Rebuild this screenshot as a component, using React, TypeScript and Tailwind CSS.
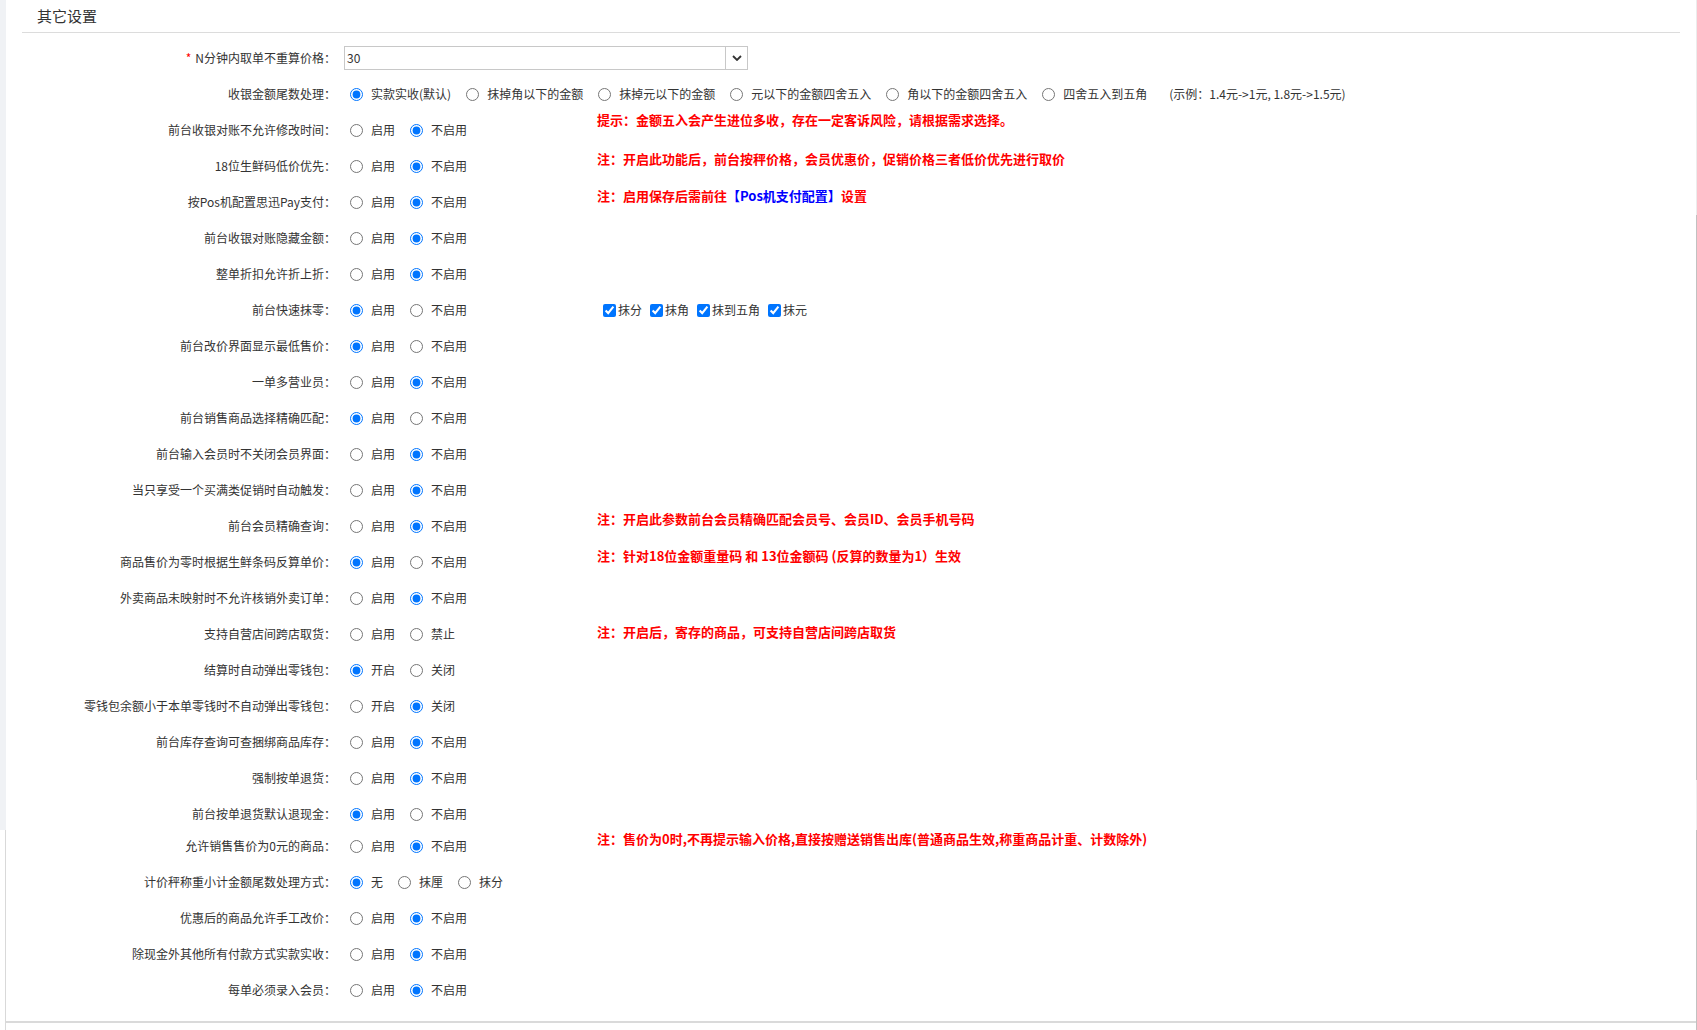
import type { ReactNode } from "react";

type Opt = { label: string; checked?: boolean };

type Row = {
  label: string;
  opts: Opt[];
  note?: ReactNode;
  noteCls?: string;
  h?: string;
};

const yes = (on: boolean): Opt[] => [
  { label: "启用", checked: on },
  { label: "不启用", checked: !on },
];

const rows: Row[] = [
  {
    label: "前台收银对账不允许修改时间",
    opts: yes(false),
    note: "提示：金额五入会产生进位多收，存在一定客诉风险，请根据需求选择。",
    noteCls: "-translate-y-[10px]",
  },
  {
    label: "18位生鲜码低价优先",
    opts: yes(false),
    note: "注：开启此功能后，前台按秤价格，会员优惠价，促销价格三者低价优先进行取价",
    noteCls: "-translate-y-[7px]",
  },
  {
    label: "按Pos机配置思迅Pay支付",
    opts: yes(false),
    note: (
      <>
        注：启用保存后需前往<span className="text-[#0000ff]">【Pos机支付配置】</span>设置
      </>
    ),
    noteCls: "-translate-y-[6px]",
  },
  { label: "前台收银对账隐藏金额", opts: yes(false) },
  { label: "整单折扣允许折上折", opts: yes(false) },
  { label: "前台快速抹零", opts: yes(true), note: "checks" },
  { label: "前台改价界面显示最低售价", opts: yes(true) },
  { label: "一单多营业员", opts: yes(false) },
  { label: "前台销售商品选择精确匹配", opts: yes(true) },
  { label: "前台输入会员时不关闭会员界面", opts: yes(false) },
  { label: "当只享受一个买满类促销时自动触发", opts: yes(false) },
  {
    label: "前台会员精确查询",
    opts: yes(false),
    note: "注：开启此参数前台会员精确匹配会员号、会员ID、会员手机号码",
    noteCls: "-translate-y-[7px]",
  },
  {
    label: "商品售价为零时根据生鲜条码反算单价",
    opts: yes(true),
    note: "注：针对18位金额重量码 和 13位金额码 (反算的数量为1）生效",
    noteCls: "-translate-y-[6px]",
  },
  { label: "外卖商品未映射时不允许核销外卖订单", opts: yes(false) },
  {
    label: "支持自营店间跨店取货",
    opts: [{ label: "启用" }, { label: "禁止" }],
    note: "注：开启后，寄存的商品，可支持自营店间跨店取货",
    noteCls: "-translate-y-[2px]",
  },
  {
    label: "结算时自动弹出零钱包",
    opts: [{ label: "开启", checked: true }, { label: "关闭" }],
  },
  {
    label: "零钱包余额小于本单零钱时不自动弹出零钱包",
    opts: [{ label: "开启" }, { label: "关闭", checked: true }],
  },
  { label: "前台库存查询可查捆绑商品库存", opts: yes(false) },
  { label: "强制按单退货", opts: yes(false) },
  { label: "前台按单退货默认退现金", opts: yes(true), h: "h-[32px] pt-[4px]" },
  {
    label: "允许销售售价为0元的商品",
    opts: yes(false),
    note: "注：售价为0时,不再提示输入价格,直接按赠送销售出库(普通商品生效,称重商品计重、计数除外)",
    noteCls: "-translate-y-[7px]",
  },
  {
    label: "计价秤称重小计金额尾数处理方式",
    opts: [{ label: "无", checked: true }, { label: "抹厘" }, { label: "抹分" }],
  },
  { label: "优惠后的商品允许手工改价", opts: yes(false) },
  { label: "除现金外其他所有付款方式实款实收", opts: yes(false) },
  { label: "每单必须录入会员", opts: yes(false) },
];

const roundOpts: Opt[] = [
  { label: "实款实收(默认)", checked: true },
  { label: "抹掉角以下的金额" },
  { label: "抹掉元以下的金额" },
  { label: "元以下的金额四舍五入" },
  { label: "角以下的金额四舍五入" },
  { label: "四舍五入到五角" },
];

function Radios({ name, opts }: { name: string; opts: Opt[] }) {
  return (
    <>
      {opts.map((o, i) => (
        <label
          key={o.label}
          className={`flex items-center ${i === 0 ? "ml-[6px]" : "ml-[15px]"}`}
        >
          <input
            type="radio"
            name={name}
            defaultChecked={o.checked}
            className="m-0 h-[13px] w-[13px] shrink-0"
          />
          <span className="ml-[8px] whitespace-nowrap">{o.label}</span>
        </label>
      ))}
    </>
  );
}

function Checks() {
  return (
    <div className="flex items-center text-[12px] text-[#333]">
      {["抹分", "抹角", "抹到五角", "抹元"].map((t, i) => (
        <label
          key={t}
          className={`flex items-center ${i === 0 ? "ml-[6px]" : "ml-[8px]"}`}
        >
          <input
            type="checkbox"
            defaultChecked
            className="m-0 h-[13px] w-[13px] shrink-0"
          />
          <span className="ml-[2px] whitespace-nowrap">{t}</span>
        </label>
      ))}
    </div>
  );
}

function Label({ children }: { children: ReactNode }) {
  return (
    <div className="w-[330px] shrink-0 whitespace-nowrap text-right">
      {children}
    </div>
  );
}

export default function App() {
  return (
    <div className="flex h-[1030px] w-full overflow-hidden bg-white font-['Noto_Sans_CJK_SC',sans-serif] text-[12px] text-[#333]">
      <div className="flex w-[6px] shrink-0 flex-col">
        <div className="h-[830px] bg-[#f0f2f5]" />
        <div className="flex-1 border-r border-[#d9d9d9]" />
      </div>

      <div className="flex min-w-0 flex-1 flex-col">
        <div className="mx-[16px] flex h-[33px] items-center border-b border-[#dcdcdc] pl-[15px] text-[15px] text-[#333]">
          其它设置
        </div>

        <div className="flex flex-1 flex-col pt-[6px]">
          <div className="flex h-[37px] items-center">
            <Label>
              <span className="mr-[4px] text-[#f00]">*</span>N分钟内取单不重算价格：
            </Label>
            <div className="ml-[8px] flex h-[24px] w-[404px] items-center border border-[#c8c8c8]">
              <div className="flex-1 pl-[2px]">30</div>
              <div className="flex h-full w-[22px] items-center justify-center border-l border-[#c8c8c8]">
                <svg width="10" height="6" viewBox="0 0 10 6">
                  <polyline
                    points="1,1 5,5 9,1"
                    fill="none"
                    stroke="#333"
                    strokeWidth="1.8"
                  />
                </svg>
              </div>
            </div>
          </div>

          <div className="flex h-9 items-center">
            <Label>收银金额尾数处理：</Label>
            <div className="ml-[8px] flex items-center">
              <Radios name="round" opts={roundOpts} />
              <span className="ml-[22px] whitespace-nowrap">
                (示例：1.4元-&gt;1元, 1.8元-&gt;1.5元)
              </span>
            </div>
          </div>

          {rows.map((r, idx) => (
            <div key={r.label} className={`flex items-center ${r.h ?? "h-9"}`}>
              <Label>{r.label}：</Label>
              <div className="ml-[8px] flex w-[253px] shrink-0 items-center">
                <Radios name={`r${idx}`} opts={r.opts} />
              </div>
              {r.note === "checks" ? (
                <Checks />
              ) : r.note ? (
                <div
                  className={`whitespace-nowrap text-[13px] font-bold text-[#ff0000] ${r.noteCls ?? ""}`}
                >
                  {r.note}
                </div>
              ) : null}
            </div>
          ))}
        </div>

        <div className="mt-[13px] h-[9px] border-t-2 border-[#dadada]" />
      </div>

      <div className="flex w-px shrink-0 flex-col">
        <div className="h-[215px] bg-[#ececec]" />
        <div className="h-[565px] bg-[#c1c1c1]" />
        <div className="h-[50px] bg-[#ececec]" />
        <div className="flex-1 bg-[#c1c1c1]" />
      </div>
    </div>
  );
}
